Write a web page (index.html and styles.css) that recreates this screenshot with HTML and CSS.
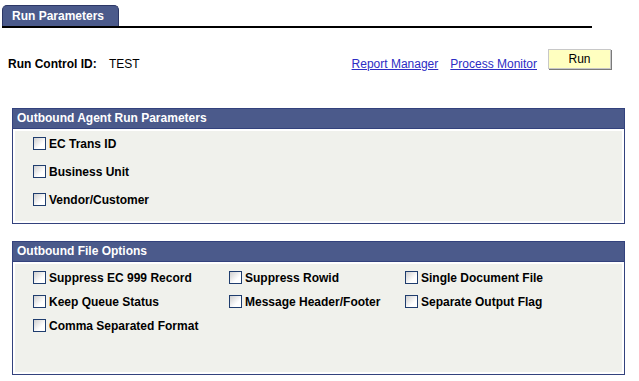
FILE: index.html
```html
<!DOCTYPE html>
<html lang="en">
<head>
    <meta charset="UTF-8">
    <title>Run Parameters</title>
    <link rel="stylesheet" href="styles.css">
</head>
<body>
    <div class="tabbar">
        <div class="tab">Run Parameters</div>
    </div>

    <div class="runrow">
        <span class="run-label">Run Control ID:</span>
        <span class="run-id">TEST</span>
        <div class="run-actions">
            <a href="#" class="link">Report Manager</a>
            <a href="#" class="link">Process Monitor</a>
            <button class="run-btn">Run</button>
        </div>
    </div>

    <div class="group group-agent">
        <div class="group-head">Outbound Agent Run Parameters</div>
        <div class="group-body">
            <label class="check"><span class="box"></span>EC Trans ID</label>
            <label class="check"><span class="box"></span>Business Unit</label>
            <label class="check"><span class="box"></span>Vendor/Customer</label>
        </div>
    </div>

    <div class="group group-file">
        <div class="group-head">Outbound File Options</div>
        <div class="group-body options">
            <label class="check"><span class="box"></span>Suppress EC 999 Record</label>
            <label class="check"><span class="box"></span>Suppress Rowid</label>
            <label class="check"><span class="box"></span>Single Document File</label>
            <label class="check"><span class="box"></span>Keep Queue Status</label>
            <label class="check"><span class="box"></span>Message Header/Footer</label>
            <label class="check"><span class="box"></span>Separate Output Flag</label>
            <label class="check"><span class="box"></span>Comma Separated Format</label>
        </div>
    </div>
</body>
</html>
```

FILE: styles.css
```css
* {
    margin: 0;
    padding: 0;
    box-sizing: border-box;
}
body {
    font-family: 'Liberation Sans', Arial, sans-serif;
    font-size: 12px;
    background: white;
    color: black;
}
.tabbar {
    display: flex;
    align-items: flex-end;
    margin: 5px 0 0 2px;
    width: 590px;
    border-bottom: 2px solid black;
}
.tab {
    height: 21px;
    line-height: 20px;
    padding: 0 14px 0 9px;
    background: #4b5a8b;
    color: white;
    font-weight: bold;
    border: 1px solid #2c3766;
    border-bottom: none;
    border-radius: 5px 5px 0 0;
}
.runrow {
    display: flex;
    align-items: flex-end;
    margin: 21px 0 0 8px;
    width: 603px;
    height: 22px;
    line-height: 14px;
}
.run-label {
    font-weight: bold;
    width: 101px;
}
.run-actions {
    margin-left: auto;
    display: flex;
    align-items: flex-end;
    height: 100%;
}
.link {
    color: #2d2dc4;
    text-decoration: underline;
    margin-right: 12px;
}
.link + .link {
    margin-right: 11px;
}
.run-btn {
    width: 63px;
    height: 20px;
    background: #ffffc0;
    border: 1px solid #c8c8c8;
    box-shadow: 1px 1px 0 #7a7a7a;
    font-family: inherit;
    font-size: 12px;
    align-self: flex-start;
}
.group {
    margin-left: 12px;
    width: 613px;
    border: 1px solid #33427d;
    background: white;
}
.group-agent {
    margin-top: 37px;
}
.group-file {
    margin-top: 17px;
}
.group-head {
    height: 20px;
    line-height: 19px;
    padding-left: 4px;
    background: #4b5a8b;
    color: white;
    font-weight: bold;
    border-bottom: 1px solid #33427d;
}
.group-body {
    margin: 2px;
    background: #f0f1ec;
    padding: 6px 0 15px 18px;
    display: flex;
    flex-direction: column;
    gap: 15px;
    height: 90px;
}
.group-body.options {
    display: grid;
    grid-template-columns: 196px 176px auto;
    gap: 11px 0;
    padding-top: 7px;
    height: 108px;
    align-content: start;
}
.check {
    display: flex;
    align-items: center;
    gap: 3px;
    height: 13px;
    font-weight: bold;
}
.box {
    width: 13px;
    height: 13px;
    border: 1px solid #1f3d6e;
    background: linear-gradient(135deg, #cfcfcf, #ffffff 65%);
}
```
